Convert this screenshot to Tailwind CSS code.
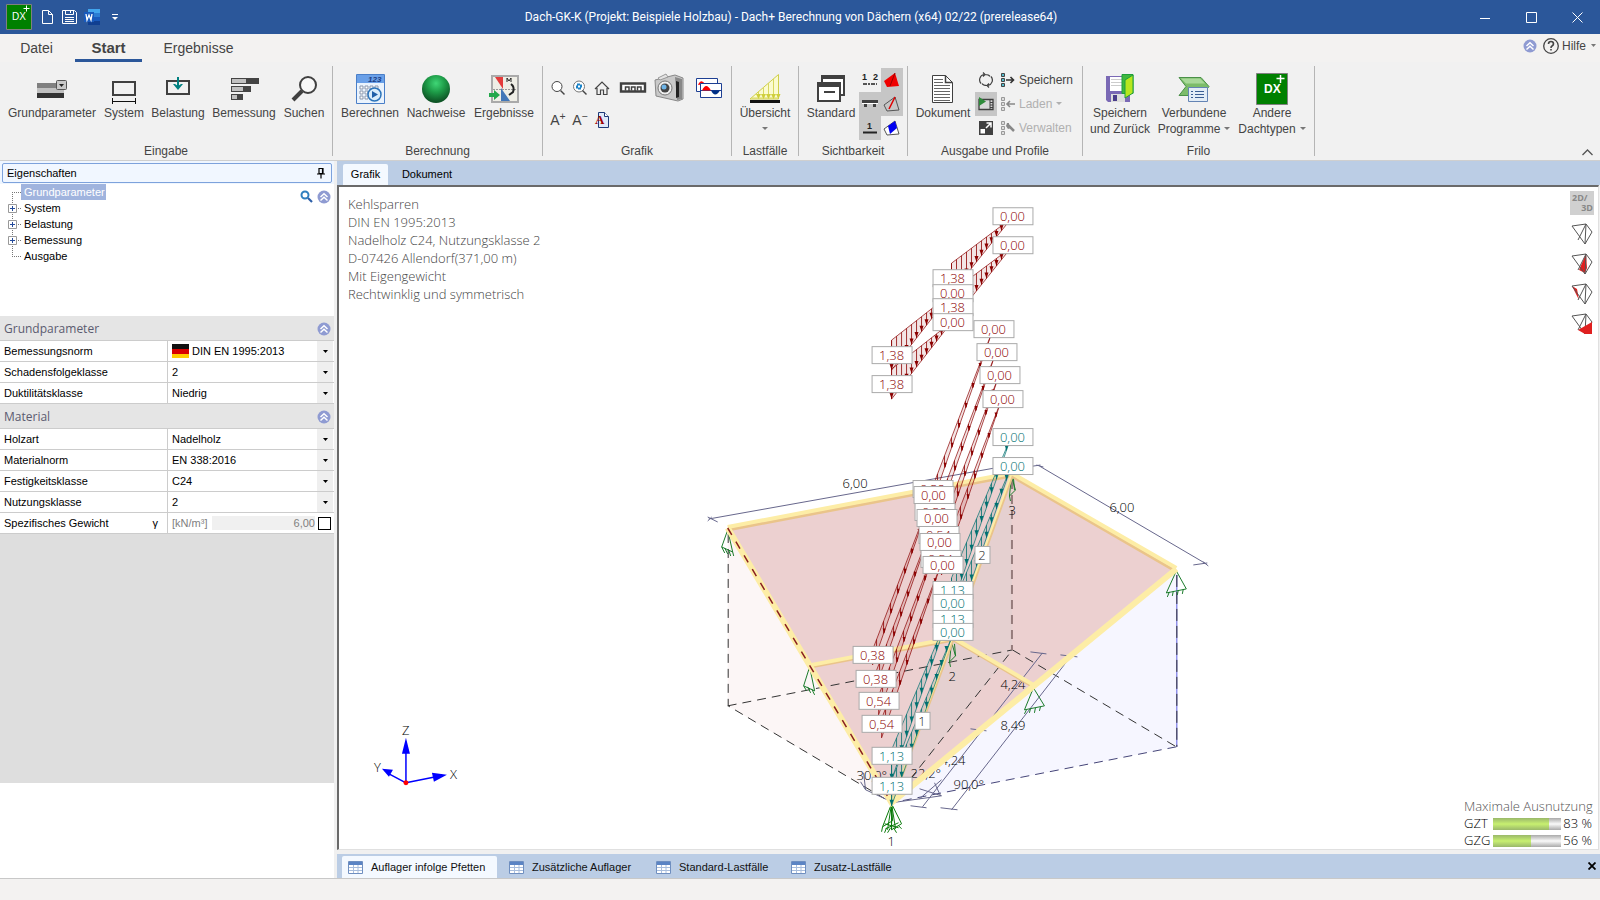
<!DOCTYPE html>
<html lang="de">
<head>
  <meta charset="UTF-8">
  <meta name="viewport" content="width=device-width, initial-scale=1.0">
  <title>Dach-GK-K - Dach+ Berechnung von Dächern</title>
  <script src="https://cdn.jsdelivr.net/npm/@tailwindcss/browser@4"></script>
</head>
<body class="flex h-screen flex-col overflow-hidden bg-[#f0f0f0] font-['Liberation_Sans',sans-serif] text-xs text-[#444]">

  <!-- shared icons -->
  <svg class="hidden">
    <symbol id="collapse" viewBox="0 0 14 14">
      <circle cx="7" cy="7" r="6.5" fill="#8f9bd2"/>
      <path d="M3.5 7 7 3.8 10.500 7M3.500 10.500 7 7.300 10.500 10.500" fill="none" stroke="#fff" stroke-width="1.500"/>
    </symbol>
    <symbol id="sheet" viewBox="0 0 15 13">
      <path d="M.5.5h14v12H.500z" fill="#fff" stroke="#6f8fc0"/>
      <path d="M1 1h13v3H1z" fill="#5b84c4"/>
      <path d="M1 6.500h13M1 9.500h13M5.500 4v8M10 4v8" stroke="#a9bedd"/>
    </symbol>
    <symbol id="roof" viewBox="0 0 22 22">
      <path d="M1 3 15 1 21 9 14 21zM7 17 15 1M15 1l-1 20" fill="none" stroke="#555"/>
    </symbol>
  </svg>

  <header class="flex h-[34px] shrink-0 items-center bg-[#2b579a] text-white">
    <div class="flex w-[340px] items-center pl-[6px]">
      <svg class="h-[26px] w-[26px]" viewBox="0 0 26 26"><path d="M.5.5h25v25H.500z" fill="#008000" stroke="#808080"/><path d="M20.500 1.500v6M17.500 4.500h6" stroke="#fff"/><text x="6" y="16" font-size="10" fill="#fff" font-family="Liberation Sans Narrow, Liberation Sans">DX</text></svg>
      <button class="ml-[10px]" aria-label="Neu"><svg width="11" height="14" viewBox="0 0 11 14"><path d="M.5.5h6l4 4v9H.500zM6.500.500v4h4" fill="none" stroke="#fff"/></svg></button>
      <button class="ml-[9px]" aria-label="Speichern"><svg width="15" height="14" viewBox="0 0 15 14"><path d="M.5.5h12l2 2v11H.500zM3.500.500v4h8v-4M8.500 1v2M3 7.500h9M3 9.500h9M3 11.500h9" fill="none" stroke="#fff"/></svg></button>
      <button class="ml-[7px]" aria-label="Word"><svg width="16" height="16" viewBox="0 0 16 16"><path d="M4 0h12v4H4z" fill="#41a5ee"/><path d="M4 4h12v4H4z" fill="#2b7cd3"/><path d="M4 8h12v4H4z" fill="#185abd"/><path d="M4 12h12v4H4z" fill="#103f91"/><path d="M0 3h10v10H0z" fill="#185abd"/><path d="m2 5 1 6 2-5 2 5 1-6" fill="none" stroke="#fff" stroke-width="1.300"/></svg></button>
      <button class="ml-[12px]" aria-label="Anpassen"><svg width="6" height="7" viewBox="0 0 6 7"><path d="M0 .5h6" stroke="#fff"/><path d="M0 3h6L3 6z" fill="#fff"/></svg></button>
    </div>
    <h1 class="flex-1 text-center font-['Roboto',sans-serif]">Dach-GK-K (Projekt: Beispiele Holzbau) - Dach+ Berechnung von Dächern (x64) 02/22 (prerelease64)</h1>
    <div class="flex w-[358px] justify-end">
      <button class="flex h-[34px] w-[46px] items-center justify-center" aria-label="Minimieren"><svg width="11" height="11"><path d="M0 6.500h10" stroke="#fff"/></svg></button>
      <button class="flex h-[34px] w-[46px] items-center justify-center" aria-label="Maximieren"><svg width="11" height="11"><path d="M.5.500h10v10H.500z" fill="none" stroke="#fff"/></svg></button>
      <button class="flex h-[34px] w-[46px] items-center justify-center" aria-label="Schließen"><svg width="11" height="11"><path d="m.5.500 10 10M10.500.500l-10 10" stroke="#fff"/></svg></button>
    </div>
  </header>

  <nav class="flex h-[28px] shrink-0 bg-[#f3f2f1] text-sm">
    <button class="w-[73px]">Datei</button>
    <button class="ml-[2px] w-[67px] border-b-3 border-[#2b579a] pt-[3px] text-[15px] font-bold">Start</button>
    <button class="w-[113px]">Ergebnisse</button>
    <div class="ml-auto flex items-center gap-[6px] pr-[4px] pb-[5px] text-xs">
      <svg class="h-[14px] w-[14px]"><use href="#collapse"/></svg>
      <button class="flex items-center gap-[3px]">
        <svg width="16" height="16" viewBox="0 0 16 16"><circle cx="8" cy="8" r="7.300" fill="none" stroke="#444" stroke-width="1.300"/><path d="M5.500 6q0-2.500 2.500-2.500T10.500 6q0 1-1.500 2-1 .600-1 2M8 11v1.500" fill="none" stroke="#444" stroke-width="1.600"/></svg>
        Hilfe
        <svg class="ml-[2px]" width="5" height="4"><path d="M0 0h5L2.500 3z" fill="#777"/></svg>
      </button>
    </div>
  </nav>

  <!-- ribbon -->
  <div class="relative flex h-[99px] shrink-0 border-b border-[#cfcfcf] bg-[#f1f1f1] py-[4px] leading-4">
    <section class="flex w-[333px] flex-col border-r border-[#b5b5b5]">
      <div class="flex flex-1 items-start pt-[7px]">
        <button class="flex w-[104px] flex-col items-center"><svg width="32" height="32" viewBox="0 0 32 32"><path d="M1 10h27v5H1z" fill="#808080"/><path d="M1 15h27v5H1z" fill="#c0c0c0"/><path d="M1 20h27v5H1z" fill="#333"/><rect x="20.500" y="7.500" width="10" height="9" rx="1" fill="#c8c8c8" stroke="#555"/><path d="M23 11h5l-2.500 3z" fill="#222"/></svg>Grundparameter</button>
        <button class="flex w-[40px] flex-col items-center"><svg width="32" height="32" viewBox="0 0 32 32"><path d="M5 9h22v13H5z" fill="none" stroke="#404040" stroke-width="2"/><path d="M4 28.500h24M4.500 25v6M27.500 25v6" stroke="#111"/></svg>System</button>
        <button class="flex w-[68px] flex-col items-center"><svg width="32" height="32" viewBox="0 0 32 32"><path d="M5 8h22v13H5z" fill="none" stroke="#404040" stroke-width="2"/><path d="M16 4v9" stroke="#008080" stroke-width="2"/><path d="M11 11h2l3 2 3-2h2l-5 6z" fill="#008080"/></svg>Belastung</button>
        <button class="flex w-[64px] flex-col items-center"><svg width="32" height="32" viewBox="0 0 32 32"><path d="M3 5h28v6H3zM3 13h20v6H3zM3 21h12v6H3z" fill="#444"/><path d="M4 6h14v4H4zM4 14h11v4H4zM4 22h5v4H4z" fill="#c0c0c0"/></svg>Bemessung</button>
        <button class="flex w-[56px] flex-col items-center"><svg width="32" height="32" viewBox="0 0 32 32"><circle cx="20" cy="12" r="8" fill="#f8f8f8" stroke="#404040" stroke-width="2"/><path d="M14 18 5 27" stroke="#404040" stroke-width="4"/></svg>Suchen</button>
      </div>
      <p class="-mb-[3px] text-center">Eingabe</p>
    </section>

    <section class="flex w-[210px] flex-col border-r border-[#b5b5b5]">
      <div class="flex flex-1 items-start pt-[7px] pl-[4px]">
        <button class="flex w-[66px] flex-col items-center"><svg width="32" height="32" viewBox="0 0 32 32"><path d="M2.500 1.500h28v29h-28z" fill="#eaf3fd" stroke="#4a7fc8"/><path d="M3 2h27v8H3z" fill="#6aa0e8"/><text x="14" y="9" font-size="8" font-style="italic" font-weight="bold" fill="#1c3f86">123</text><path d="M6 13h3v3H6zM11 13h3v3h-3zM16 13h3v3h-3zM21 13h3v3h-3zM6 18h3v3H6zM11 18h3v3h-3zM6 23h3v3H6zM11 23h3v3h-3z" fill="#fff" stroke="#8a97ad"/><circle cx="20.500" cy="21.500" r="6.500" fill="#d8ecfb" stroke="#2d74ba" stroke-width="1.500"/><path d="m18 18 6 3.500-6 3.500z" fill="#1f5fa8"/></svg>Berechnen</button>
        <button class="flex w-[66px] flex-col items-center"><svg width="32" height="32" viewBox="0 0 32 32"><defs><radialGradient id="ball" cx=".5" cy=".3" r=".65"><stop offset="0" stop-color="#3fd676"/><stop offset=".5" stop-color="#1d9a47"/><stop offset="1" stop-color="#0e5526"/></radialGradient></defs><circle cx="16" cy="16" r="14" fill="url(#ball)"/></svg>Nachweise</button>
        <button class="flex w-[70px] flex-col items-center"><svg width="32" height="32" viewBox="0 0 32 32"><path d="M4 3h26v26H4z" fill="#efeee6" stroke="#aaa" stroke-width="2"/><path d="M7 4h8v12z" fill="#e43b3b"/><path d="m13 15 9 13h-9z" fill="#4377b8"/><path d="M5 16.500h24" stroke="#999" stroke-dasharray="2 1"/><path d="M23 11q4 3 2 8l-4 3" fill="none" stroke="#222" stroke-width="2"/><path d="M19 9V5l2 3 2-3v4" fill="none" stroke="#222"/><path d="M1 20h5v-3l6 5-6 5v-3H1z" fill="#22a84a"/></svg>Ergebnisse</button>
      </div>
      <p class="-mb-[3px] text-center">Berechnung</p>
    </section>

    <section class="flex w-[189px] flex-col border-r border-[#b5b5b5]">
      <div class="grid flex-1 grid-cols-[22px_22px_22px_40px_32px_48px] grid-rows-[32px_32px] place-items-center pt-[6px] pl-[4px]">
        <button aria-label="Lupe"><svg width="16" height="16" viewBox="0 0 16 16"><circle cx="7" cy="6.500" r="5" fill="#fff" stroke="#444"/><path d="m10.500 10.500 4 4" stroke="#444" stroke-width="1.500"/></svg></button>
        <button aria-label="Ausschnitt"><svg width="16" height="16" viewBox="0 0 16 16"><circle cx="7" cy="6.500" r="5.500" fill="#fff" stroke="#777"/><path d="m10.500 10.500 4 4" stroke="#444" stroke-width="1.500"/><path d="M5 4.500h4v4H5z" fill="none" stroke="#1b83c8" stroke-width="2" stroke-dasharray="3 1"/></svg></button>
        <button aria-label="Gesamtansicht"><svg width="16" height="16" viewBox="0 0 16 16"><path d="m1 9 7-7 7 7M3 8v6.500h3.500V10h3v4.500H13V8" fill="none" stroke="#444" stroke-width="1.200"/></svg></button>
        <button aria-label="Maßlinien"><svg width="28" height="14" viewBox="0 0 28 14"><path d="M2 2.500h24v8H2z" fill="#fff" stroke="#404040" stroke-width="2.400"/><path d="M6.500 9.500V6h3.500v4M12.500 9.500V6h3.500v4M18.500 9.500V6h3.500v4" fill="none" stroke="#404040" stroke-width="1.500"/></svg></button>
        <button aria-label="Bild"><svg width="32" height="32" viewBox="0 0 32 32"><path d="m2 8 20-5 8 3v21l-5 2L3 24z" fill="#c9c9c9" stroke="#888"/><path d="m22 5 7 2v20l-5 1z" fill="#888"/><path d="m23 9 3 1v15l-3 1z" fill="#222"/><path d="m5 6 8-4 2 3-8 3z" fill="#e4e4e4" stroke="#999"/><circle cx="12" cy="16" r="7" fill="#eee" stroke="#777"/><circle cx="12" cy="16" r="4.500" fill="#444"/><circle cx="11" cy="15" r="2.500" fill="#6fb5e8"/></svg></button>
        <button aria-label="Ergebnisgrafik"><svg width="28" height="22" viewBox="0 0 28 22"><path d="M1.500 1.500h21v13h-21z" fill="#fff" stroke="#1d3f93"/><path d="M3 8q3-7 7-1z" fill="red"/><path d="M5.500 6.500h21v14h-21z" fill="#fff" stroke="#1d3f93"/><path d="M6 13.500h20" stroke="#1d3f93"/><path d="M7 13.500q4-9 9 0z" fill="red"/><path d="M16 13.500q4 8 9 0z" fill="#003087"/></svg></button>
        <button class="text-sm" aria-label="Schrift größer">A<sup>+</sup></button>
        <button class="text-sm" aria-label="Schrift kleiner">A<sup>−</sup></button>
        <button aria-label="Schriftart"><svg width="16" height="16" viewBox="0 0 16 16"><path d="M4.500.500h6l4 4v11h-10z" fill="#dfe9f8" stroke="#1e3a78"/><path d="M10.500.500v4h4" fill="#fff" stroke="#1e3a78"/><text x="1" y="12" font-size="13" font-weight="bold" fill="#a00000" font-family="Liberation Serif">A</text></svg></button>
      </div>
      <p class="-mb-[3px] text-center">Grafik</p>
    </section>

    <section class="flex w-[67px] flex-col border-r border-[#b5b5b5]">
      <div class="flex flex-1 items-start justify-center pt-[7px]">
        <button class="flex flex-col items-center"><svg width="32" height="32" viewBox="0 0 32 32"><path d="M1 27h30v3H1z" fill="#111"/><path d="M1 26 29.500 1.500V26z" fill="#fbfbd0" stroke="#cfcf4a"/><path d="M9.500 18v7M14.500 14v11M19.500 10v15M24.500 6v19M3 25h26" stroke="#d8d860"/><path d="m7 21 2.500 5 2.500-5zM12 21l2.500 5 2.500-5zM17 21l2.500 5 2.500-5zM22 21l2.500 5 2.500-5zM27 21l2.500 5 2-5z" fill="#cfcf3c"/></svg>Übersicht<svg class="mt-[6px]" width="6" height="4"><path d="M0 0h6L3 3z" fill="#777"/></svg></button>
      </div>
      <p class="-mb-[3px] text-center">Lastfälle</p>
    </section>

    <section class="flex w-[109px] flex-col border-r border-[#b5b5b5]">
      <div class="flex flex-1 items-start">
        <button class="flex w-[60px] flex-col items-center pt-[7px] pl-[4px]"><svg width="32" height="32" viewBox="0 0 32 32"><path d="M7 3h22v19H7z" fill="#fff" stroke="#404040" stroke-width="2"/><path d="M6 2h24v4H6z" fill="#404040"/><path d="M3 10h22v18H3z" fill="#fff" stroke="#404040" stroke-width="2"/><path d="M2 9h24v5H2z" fill="#404040"/><path d="M9 19h11" stroke="#404040" stroke-width="2"/></svg>Standard</button>
        <div class="grid grid-cols-[22px_22px] grid-rows-[24px_24px_24px] pt-[2px]">
          <button class="flex items-center justify-center" aria-label="Stabnummern"><svg width="18" height="16" viewBox="0 0 18 16"><text x="1" y="8" font-size="9" font-weight="bold" fill="#222">1</text><text x="12" y="8" font-size="9" font-weight="bold" fill="#222">2</text><path d="M2 12h14" stroke="#222" stroke-width="1.500" stroke-dasharray="4 1 2 1"/></svg></button>
          <button class="flex items-center justify-center bg-[#c6c6c6]" aria-label="Flächen"><svg width="18" height="18" viewBox="0 0 18 18"><path d="M1 10 12 2l4 13-12 1z" fill="#f00000"/><path d="m12 2-5 13" stroke="#900"/></svg></button>
          <button class="flex items-center justify-center bg-[#c6c6c6]" aria-label="Auflager"><svg width="16" height="12" viewBox="0 0 16 12"><path d="M0 2h16v3H0z" fill="#404040"/><path d="M2 6h3v3H2zM11 6h3v3h-3z" fill="#404040"/><path d="M0 5.500h16" stroke="#fff"/></svg></button>
          <button class="flex items-center justify-center bg-[#c6c6c6]" aria-label="Kanten"><svg width="18" height="18" viewBox="0 0 18 18"><path d="m1 10 11-8 4 13-12 1z" fill="none" stroke="#555"/><path d="M12 2 6 14" stroke="#e00000" stroke-width="1.500"/></svg></button>
          <button class="flex items-center justify-center bg-[#c6c6c6]" aria-label="Knoten"><svg width="16" height="14" viewBox="0 0 16 14"><text x="5" y="8" font-size="9" font-weight="bold" fill="#222">1</text><path d="M1 11.500h14" stroke="#222" stroke-width="2"/></svg></button>
          <button class="flex items-center justify-center" aria-label="Dachfläche"><svg width="18" height="18" viewBox="0 0 18 18"><path d="m1 10 11-8 4 13-12 1z" fill="#fff" stroke="#555"/><path d="m5 7 7-5 2 7-7 6z" fill="#0000f0"/></svg></button>
        </div>
      </div>
      <p class="-mb-[3px] text-center">Sichtbarkeit</p>
    </section>

    <section class="flex w-[175px] flex-col border-r border-[#b5b5b5]">
      <div class="flex flex-1 items-start">
        <button class="flex w-[67px] flex-col items-center pt-[7px] pl-[3px]"><svg width="32" height="32" viewBox="0 0 32 32"><path d="M5.500 2.500h13l7 7v20h-20z" fill="#fff" stroke="#404040"/><path d="M18.500 2.500v7h7" fill="none" stroke="#404040" stroke-width="1.500"/><path d="M7 6.500h9M7 9.500h9M7 12.500h16M7 15.500h16M7 18.500h16M7 21.500h16M7 24.500h16M7 27.500h16" stroke="#666"/></svg>Dokument</button>
        <div class="grid w-[22px] grid-rows-[24px_24px_24px] pt-[2px]">
          <button class="flex items-center justify-center" aria-label="Aktualisieren"><svg width="14" height="16" viewBox="0 0 14 16"><path d="M5 2.500a5.500 5.500 0 0 0-3 9M9 13.500a5.500 5.500 0 0 0 3-9M4 .500l2 2-2 2M10 15.500l-2-2 2-2M6 2.500q4 0 5 2M8 13.500q-4 0-5-2" fill="none" stroke="#404040" stroke-width="1.200"/></svg></button>
          <button class="flex items-center justify-center bg-[#c6c6c6]" aria-label="Vorschau"><svg width="16" height="14" viewBox="0 0 16 14"><path d="M1 2.500h14v10H1z" fill="#d8d8d8" stroke="#404040" stroke-width="1.300"/><path d="M12 3v9M12 5.500h3M12 8h3M12 10.500h3" stroke="#404040"/><path d="m1 0 7 4.500L1 9z" fill="#2e8b3a"/></svg></button>
          <button class="flex items-center justify-center" aria-label="Vergrößern"><svg width="14" height="14" viewBox="0 0 14 14"><path d="M0 0h14v14H0z" fill="#404040"/><path d="M1.500 8H6v4.500H1.500z" fill="#fff"/><path d="M7 7l5-5M7.500 2H12v4.500" fill="none" stroke="#fff" stroke-width="1.500"/></svg></button>
        </div>
        <div class="grid grid-rows-[24px_24px_24px] pt-[2px] pl-[4px]">
          <button class="flex items-center gap-[4px]"><svg width="14" height="14" viewBox="0 0 14 14"><path d="M.5.500h3v3h-3zM.500 5.500h3v3h-3zM.500 10.500h3v3h-3z" fill="#5bc" stroke="#444"/><path d="M5 7h7M9.500 4l3 3-3 3" fill="none" stroke="#333" stroke-width="1.600"/></svg>Speichern</button>
          <button class="flex items-center gap-[4px] text-[#b0b0b0]" disabled><svg width="14" height="14" viewBox="0 0 14 14"><path d="M.5.500h3v3h-3zM.500 5.500h3v3h-3zM.500 10.500h3v3h-3z" fill="#ddd" stroke="#999"/><path d="M14 7H7M9 4 6 7l3 3" fill="none" stroke="#888" stroke-width="1.600"/></svg>Laden<svg width="6" height="4"><path d="M0 0h6L3 3z" fill="#b0b0b0"/></svg></button>
          <button class="flex items-center gap-[4px] text-[#b0b0b0]" disabled><svg width="14" height="14" viewBox="0 0 14 14"><path d="M.5.500h3v3h-3zM.500 5.500h3v3h-3zM.500 10.500h3v3h-3z" fill="#ddd" stroke="#999"/><path d="m7 4 6 6" stroke="#888" stroke-width="2.500"/><path d="M6 2h2v3h2v2L7 8 5 5z" fill="#888"/></svg>Verwalten</button>
        </div>
      </div>
      <p class="-mb-[3px] text-center">Ausgabe und Profile</p>
    </section>

    <section class="flex w-[232px] flex-col border-r border-[#b5b5b5]">
      <div class="flex flex-1 items-start pt-[7px] pl-[1px]">
        <button class="flex w-[72px] flex-col items-center"><svg width="32" height="32" viewBox="0 0 32 32"><path d="M2 3h24v26H4l-2-2z" fill="#7a69b5"/><path d="M6 4h14v14H6z" fill="#fff"/><path d="M7 6.500h12M7 9.500h12M7 12.500h12" stroke="#ccc"/><path d="M7 21h14v8H7z" fill="#ddd"/><path d="M9 22h4v6H9z" fill="#4a3d8a"/><path d="M18 1.500h11v19H18z" fill="#3fb83f" stroke="#1f9f3a"/><path d="m21 7 8-5v18l-8 5z" fill="#b8e61e" stroke="#1f9f3a"/></svg>Speichern<span>und Zurück</span></button>
        <button class="flex w-[76px] flex-col items-center"><svg width="32" height="32" viewBox="0 0 32 32"><path d="M1 4.500h22l8 9-7 9H1l7-9z" fill="#7cbc6a" stroke="#4a9048"/><path d="M3 5.500h19l5 5H8z" fill="#a9d99a"/><path d="M10.500 14.500h19v14h-19z" fill="#e3edf7" stroke="#6484b4"/><path d="M13 18.500h2M13 21.500h2M13 24.500h2M17 18.500h9M17 21.500h9M17 24.500h9" stroke="#3c5f94"/></svg>Verbundene<span class="flex items-center gap-[4px]">Programme<svg width="6" height="4"><path d="M0 0h6L3 3z" fill="#777"/></svg></span></button>
        <button class="flex w-[80px] flex-col items-center"><svg width="32" height="32" viewBox="0 0 32 32"><path d="M.5.500h31v31H.500z" fill="#008000" stroke="#808080"/><path d="M24.500 2v8M20.500 5.500h8" stroke="#fff" stroke-width="1.500"/><text x="8" y="20" font-size="12" fill="#fff" font-weight="bold" font-family="Liberation Sans Narrow, Liberation Sans">DX</text></svg>Andere<span class="flex items-center gap-[4px]">Dachtypen<svg width="6" height="4"><path d="M0 0h6L3 3z" fill="#777"/></svg></span></button>
      </div>
      <p class="-mb-[3px] text-center">Frilo</p>
    </section>
    <button class="mt-auto mr-[7px] ml-auto" aria-label="Menüband einklappen"><svg width="11" height="7"><path d="m.5 6 5-5 5 5" fill="none" stroke="#555" stroke-width="1.300"/></svg></button>
  </div>

  <main class="flex min-h-0 flex-1">
    <!-- properties -->
    <aside class="flex w-[334px] shrink-0 flex-col bg-white text-[11px] text-black">
      <div class="bg-[#eff6ff] px-[2px] pt-[2px] pb-px">
        <h2 class="flex h-[20px] items-center justify-between rounded-xs border border-[#7da2dc] bg-[#f1f7ff] pr-[6px] pl-[4px]">Eigenschaften
          <svg width="8" height="11" viewBox="0 0 8 11"><path d="M2 .500h4v5H2zM0 6h8M4 6v4.500M5.500 1v5" fill="none" stroke="#000" stroke-width="1.200"/></svg>
        </h2>
      </div>
      <div class="flex h-[132px] justify-between">
        <ul class="relative pl-[21px] leading-4">
          <li class="w-[85px] bg-[#a0b4de] px-[3px] text-white">Grundparameter</li>
          <li class="px-[3px]">System</li>
          <li class="px-[3px]">Belastung</li>
          <li class="px-[3px]">Bemessung</li>
          <li class="px-[3px]">Ausgabe</li>
          <svg class="absolute top-0 left-[8px]" width="13" height="80" viewBox="0 0 13 80">
            <path d="M4.500 8v64M4 8.500h9M4 24.500h9M4 40.500h9M4 56.500h9M4 72.500h9" stroke="#777" stroke-dasharray="1 1"/>
            <path d="M.5 20.500h8v8h-8zM.500 36.500h8v8h-8zM.500 52.500h8v8h-8z" fill="#fff" stroke="#999"/>
            <path d="M2 24.500h5M4.500 22v5M2 40.500h5M4.500 38v5M2 56.500h5M4.500 54v5" stroke="#234a9a"/>
          </svg>
        </ul>
        <div class="flex items-start gap-[4px] pt-[6px] pr-[3px]">
          <svg width="13" height="13" viewBox="0 0 13 13"><circle cx="5" cy="5" r="3.500" fill="#fff" stroke="#2f7fbf" stroke-width="2"/><path d="m8 8 4 4" stroke="#2c5ea8" stroke-width="2.200"/></svg>
          <svg class="h-[14px] w-[14px]"><use href="#collapse"/></svg>
        </div>
      </div>

      <div class="flex-1 bg-white">
        <form class="h-[467px] bg-[#dedede]">
          <h3 class="flex h-[25px] items-center justify-between border-b border-[#ccc] bg-[#e5e5e5] pt-[2px] pr-[3px] pl-[4px] font-['Open_Sans',sans-serif] text-xs font-medium text-[#5b5b70]">Grundparameter<svg class="h-[14px] w-[14px]"><use href="#collapse"/></svg></h3>
          <div class="flex h-[21px] border-b border-[#ccc] bg-white">
            <label for="norm" class="w-[168px] shrink-0 border-r border-[#ccc] pl-[4px] leading-[20px]">Bemessungsnorm</label>
            <div class="relative flex flex-1 items-center gap-[3px] pl-[4px]">
              <svg width="17" height="14"><path d="M0 0h17v5H0z" fill="#111"/><path d="M0 5h17v5H0z" fill="#d80000"/><path d="M0 10h17v4H0z" fill="#ffcc00"/></svg>
              <select id="norm" class="h-full flex-1 appearance-none pt-px"><option>DIN EN 1995:2013</option></select>
              <span class="pointer-events-none absolute top-0 right-px flex h-full w-[16px] items-center justify-center bg-[#efefef]"><svg width="5" height="3"><path d="M0 0h5L2.500 3z" fill="#000"/></svg></span>
            </div>
          </div>
          <div class="flex h-[21px] border-b border-[#ccc] bg-white">
            <label for="folge" class="w-[168px] shrink-0 border-r border-[#ccc] pl-[4px] leading-[20px]">Schadensfolgeklasse</label>
            <div class="relative flex flex-1 pl-[4px]">
              <select id="folge" class="h-full flex-1 appearance-none pt-px"><option>2</option></select>
              <span class="pointer-events-none absolute top-0 right-px flex h-full w-[16px] items-center justify-center bg-[#efefef]"><svg width="5" height="3"><path d="M0 0h5L2.500 3z" fill="#000"/></svg></span>
            </div>
          </div>
          <div class="flex h-[21px] border-b border-[#ccc] bg-white">
            <label for="dukt" class="w-[168px] shrink-0 border-r border-[#ccc] pl-[4px] leading-[20px]">Duktilitätsklasse</label>
            <div class="relative flex flex-1 pl-[4px]">
              <select id="dukt" class="h-full flex-1 appearance-none pt-px"><option>Niedrig</option></select>
              <span class="pointer-events-none absolute top-0 right-px flex h-full w-[16px] items-center justify-center bg-[#efefef]"><svg width="5" height="3"><path d="M0 0h5L2.500 3z" fill="#000"/></svg></span>
            </div>
          </div>
          <h3 class="flex h-[25px] items-center justify-between border-b border-[#ccc] bg-[#e5e5e5] pt-[2px] pr-[3px] pl-[4px] font-['Open_Sans',sans-serif] text-xs font-medium text-[#5b5b70]">Material<svg class="h-[14px] w-[14px]"><use href="#collapse"/></svg></h3>
          <div class="flex h-[21px] border-b border-[#ccc] bg-white">
            <label for="holz" class="w-[168px] shrink-0 border-r border-[#ccc] pl-[4px] leading-[20px]">Holzart</label>
            <div class="relative flex flex-1 pl-[4px]">
              <select id="holz" class="h-full flex-1 appearance-none pt-px"><option>Nadelholz</option></select>
              <span class="pointer-events-none absolute top-0 right-px flex h-full w-[16px] items-center justify-center bg-[#efefef]"><svg width="5" height="3"><path d="M0 0h5L2.500 3z" fill="#000"/></svg></span>
            </div>
          </div>
          <div class="flex h-[21px] border-b border-[#ccc] bg-white">
            <label for="matnorm" class="w-[168px] shrink-0 border-r border-[#ccc] pl-[4px] leading-[20px]">Materialnorm</label>
            <div class="relative flex flex-1 pl-[4px]">
              <select id="matnorm" class="h-full flex-1 appearance-none pt-px"><option>EN 338:2016</option></select>
              <span class="pointer-events-none absolute top-0 right-px flex h-full w-[16px] items-center justify-center bg-[#efefef]"><svg width="5" height="3"><path d="M0 0h5L2.500 3z" fill="#000"/></svg></span>
            </div>
          </div>
          <div class="flex h-[21px] border-b border-[#ccc] bg-white">
            <label for="fest" class="w-[168px] shrink-0 border-r border-[#ccc] pl-[4px] leading-[20px]">Festigkeitsklasse</label>
            <div class="relative flex flex-1 pl-[4px]">
              <select id="fest" class="h-full flex-1 appearance-none pt-px"><option>C24</option></select>
              <span class="pointer-events-none absolute top-0 right-px flex h-full w-[16px] items-center justify-center bg-[#efefef]"><svg width="5" height="3"><path d="M0 0h5L2.500 3z" fill="#000"/></svg></span>
            </div>
          </div>
          <div class="flex h-[21px] border-b border-[#ccc] bg-white">
            <label for="nutz" class="w-[168px] shrink-0 border-r border-[#ccc] pl-[4px] leading-[20px]">Nutzungsklasse</label>
            <div class="relative flex flex-1 pl-[4px]">
              <select id="nutz" class="h-full flex-1 appearance-none pt-px"><option>2</option></select>
              <span class="pointer-events-none absolute top-0 right-px flex h-full w-[16px] items-center justify-center bg-[#efefef]"><svg width="5" height="3"><path d="M0 0h5L2.500 3z" fill="#000"/></svg></span>
            </div>
          </div>
          <div class="flex h-[21px] border-b border-[#ccc] bg-white">
            <label for="gewicht" class="flex w-[168px] shrink-0 justify-between border-r border-[#ccc] pr-[9px] pl-[4px] leading-[20px]">Spezifisches Gewicht<span>γ</span></label>
            <div class="flex min-w-0 flex-1 items-center gap-[3px] pr-[3px] pl-[4px] text-[#808080]">
              <span class="w-[37px]">[kN/m³]</span>
              <input id="gewicht" class="h-[14px] min-w-0 flex-1 bg-[#f0f0f0] text-right" value="6,00">
              <input type="checkbox" aria-label="Gewicht überschreiben" class="h-[13px] w-[13px] appearance-none border border-black bg-white">
            </div>
          </div>
        </form>
      </div>
    </aside>

    <section class="flex min-w-0 flex-1 flex-col pl-[3px] text-[11px] text-black">
      <div class="flex h-[24px] items-end bg-[#bbcde5] pl-[6px]">
        <button class="h-[21px] w-[45px] rounded-t-xs bg-[#f4f9ff] pb-px">Grafik</button>
        <button class="ml-[7px] h-[21px] w-[64px] pb-px">Dokument</button>
      </div>

      <div class="relative mr-px flex-1 border-t-2 border-r border-b border-l-2 border-t-[#6a6a6a] border-r-[#e0e0e0] border-b-[#e0e0e0] border-l-[#6a6a6a] bg-white font-['Open_Sans',sans-serif] font-light">
        <svg id="scene" class="absolute inset-0 h-full w-full" viewBox="338 187 1260 662" font-size="13">
          <!-- faces -->
          <path d="M727 528V706L891 803z" fill="#fcf6f6"/>
          <path d="M1176 569V747L891 803z" fill="#f6f6ff"/>
          <path d="M727 528 1011 474 1176 569 891 803z" fill="#ecd0d0"/>
          <path d="M1011 474 1012 650 891 803z" fill="#e5d0d0"/>
          <!-- base and verticals -->
          <g fill="none" stroke="#333" stroke-dasharray="9 6">
            <path d="M727.500 534V706L891 803M727 706 1012 650M1012 650l164 97M891 803l121-153"/>
            <path d="M1011.500 480V650" stroke="#967c7c" stroke-width="2"/>
            <path d="M1176.500 575V747" stroke="#5a5ae0" stroke-dasharray="none"/>
            <path d="M1176.500 575V747" stroke-dasharray="12 5"/>
            <path d="M1176 747 891 803" stroke="#447"/>
          </g>
          <!-- dimension lines -->
          <g fill="none" stroke="#66668c">
            <path d="m708 519 303-54M1026 467l14-2M1039 466l167 98M707 517l10 5M711 517l-4 4M1036 465l7 2M1193 565l14-2M1203 562l5 4"/>
            <path d="M1042 653 922 807M1070 657 951 810M1030 652l16 2M1060 655l17 2M970 729l16 2M910 806l16 2M940 808l17 2"/>
            <path d="M863 773l2 17 26 12M865 790l-5-8M891 803l50-7-22-7M919 799l22-19M934 783l6 13"/>
          </g>
          <g fill="#000">
            <text x="842" y="488">6,00</text>
            <text x="1109" y="512">6,00</text>
            <text x="1000" y="689">4,24</text>
            <text x="1000" y="730">8,49</text>
            <text x="940" y="765">4,24</text>
            <text x="856" y="780">30,0°</text>
            <text x="910" y="778">22,2°</text>
            <text x="953" y="789">90,0°</text>
            <text x="1008" y="515">3</text>
            <text x="948" y="681">2</text>
            <text x="887" y="846">1</text>
          </g>
          <!-- supports -->
          <g fill="none" stroke="#1a7a2a">
            <path d="m727 530-6 17 11 5zM721 547l3 6M724 548l3 6M728 550l2 6M732 552l1 4"/>
            <path d="m809 667-6 19 11 5zM803 686l3 5M807 687l3 6M811 689l3 6"/>
            <path d="m1176 571-10 22 20-4zM1169 592l-2 5M1173 591l-1 5M1178 590l-1 5M1183 589l-1 5"/>
            <path d="m1033 688-9 22 20-4zM1026 710l-2 4M1030 709l-1 4M1035 708l-1 5M1040 707l-1 4"/>
            <path d="m1011 476-2 20 6-6zM1009 496l1 5M1013 478l1 12"/>
            <path d="m951 642-2 20 6-6zM949 662l1 5M954 644l1 12"/>
            <path d="m891 804-9 23 10-6zM891 804l10 20-10 6zM891 804l-4 26M891 804l4 25M891 804v26M882 827l-1 5M886 828l-2 5M890 828l-3 5M893 828l3 5M898 826l3 3M884 824l14 4M885 829l13-6" stroke="#0a7a0a"/>
          </g>
          <!-- rafters -->
          <g fill="none" stroke-width="3">
            <path d="M727 530 1011 476 1175 571M811 667 953 640 1033 687" stroke="#eac48a"/>
            <path d="m1012 475-60 166-61 162" stroke="#eac48a"/>
            <path d="m1011 474-60 166-60 162" stroke="#fdeda6" stroke-width="2"/>
            <path d="M727 527 1011 473 1176 568M811 665 953 638 1033 685" stroke="#fdeda6" stroke-width="4"/>
            <path d="M727 528 891 803 1176 569" stroke="#fdeda6" stroke-width="6"/>
            <path d="M727 528 891 803" stroke="#8b2020" stroke-width="1.500" stroke-dasharray="8 8"/>
          </g>
          <g id="loads"></g>
          <g id="labels"></g>
          <!-- axes -->
          <g stroke="#00f" fill="#00f">
            <path d="M405 783v-35M405 783l30-6M405 783l-17-9" stroke-width="1.500"/>
            <path d="m401 754 4-16 4 16zM431 773l15 2-13 7zM381 769l11 1-4 7z" stroke="none"/>
          </g>
          <circle cx="405" cy="783" r="2.500" fill="red"/>
          <g fill="#000"><text x="401" y="735">Z</text><text x="449" y="779">X</text><text x="373" y="772">Y</text></g>
        </svg>

        <div class="absolute top-[8px] left-[9px] text-[13px] leading-[18px] text-[#444]">
          <p>Kehlsparren</p>
          <p>DIN EN 1995:2013</p>
          <p>Nadelholz C24, Nutzungsklasse 2</p>
          <p>D-07426 Allendorf(371,00 m)</p>
          <p>Mit Eigengewicht</p>
          <p>Rechtwinklig und symmetrisch</p>
        </div>

        <div class="absolute top-[4px] right-[4px] flex flex-col items-center gap-[8px]">
          <button class="h-[24px] w-[24px] bg-[#d0d0d0] text-[9px] leading-[10px] font-bold text-[#888]"><span class="block pl-[2px] text-left">2D/</span><span class="block pr-px text-right">3D</span></button>
          <button aria-label="Ansicht 3D"><svg width="22" height="22"><use href="#roof"/></svg></button>
          <button aria-label="Ansicht vorne"><svg width="22" height="22"><path d="m8 17 7-16 1 14-2 5z" fill="#e02020"/><use href="#roof"/></svg></button>
          <button aria-label="Ansicht seitlich"><svg width="22" height="22"><path d="m1 3 5 3 2 11z" fill="#e02020"/><use href="#roof"/></svg></button>
          <button aria-label="Ansicht oben"><svg width="22" height="22"><use href="#roof"/><path d="m7 17 14-8v12h-7z" fill="#e02020"/></svg></button>
        </div>

        <div class="absolute right-[6px] bottom-0 w-[128px] text-[13px] leading-[17px] whitespace-nowrap">
          <p class="text-[#555]">Maximale Ausnutzung</p>
          <div class="flex items-center"><span class="w-[29px]">GZT</span><div class="h-[12px] w-[68px] bg-linear-to-b from-[#aaa] via-[#fafafa] to-[#aaa]"><div class="h-full bg-linear-to-b from-[#9ab86a] via-[#c8f070] to-[#9ab86a]" style="width:83%"></div></div><span class="ml-auto">83 %</span></div>
          <div class="flex items-center"><span class="w-[29px]">GZG</span><div class="h-[12px] w-[68px] bg-linear-to-b from-[#aaa] via-[#fafafa] to-[#aaa]"><div class="h-full bg-linear-to-b from-[#9ab86a] via-[#c8f070] to-[#9ab86a]" style="width:56%"></div></div><span class="ml-auto">56 %</span></div>
        </div>
      </div>

      <div class="mt-[4px] flex h-[24px] items-end bg-[#bbcde5] pl-[5px] text-[#111]">
        <button class="flex h-[22px] w-[155px] items-center gap-[8px] rounded-t-xs bg-[#f4f9ff] pl-[6px]"><svg width="15" height="13"><use href="#sheet"/></svg>Auflager infolge Pfetten</button>
        <button class="flex h-[22px] w-[146px] items-center gap-[8px] pl-[12px]"><svg width="15" height="13"><use href="#sheet"/></svg>Zusätzliche Auflager</button>
        <button class="flex h-[22px] w-[136px] items-center gap-[8px] pl-[13px]"><svg width="15" height="13"><use href="#sheet"/></svg>Standard-Lastfälle</button>
        <button class="flex h-[22px] w-[130px] items-center gap-[8px] pl-[12px]"><svg width="15" height="13"><use href="#sheet"/></svg>Zusatz-Lastfälle</button>
        <button class="mr-[4px] ml-auto self-center" aria-label="Schließen"><svg width="8" height="8"><path d="m.5.500 7 7M7.500.500l-7 7" stroke="#000" stroke-width="1.800"/></svg></button>
      </div>
    </section>
  </main>
  <footer class="h-[22px] shrink-0 border-t border-[#c8c8c8] bg-[#f3f2f1]"></footer>

  <script>
    const red = '#8b0000', teal = '#007070';

    // triangular line load: apex x/y, run to the left, rise of the upper edge, load height at the end
    function load(x, y, dx, dy, h, color) {
      const step = h < 20 ? 7 : 5;
      let d = '', tips = '';
      for (let s = step; s <= dx; s += step) {
        const top = y + dy * s / dx, bottom = top + h * s / dx;
        d += `M${x - s} ${top}V${bottom}`;
        if (h > 20) tips += `M${x - s - 2} ${bottom - 6}h4l-2 6z`;
        else tips += `M${x - s - 1} ${bottom - 5}h3l-1 5z`;
      }
      return `<path d="M${x} ${y}l${-dx} ${dy}v${h}z" fill="${color}" fill-opacity=".1" stroke="${color}" stroke-width=".7"/>` +
        `<path d="${d}" stroke="${color}" stroke-opacity=".8"/><path d="${tips}" fill="${color}"/>`;
    }

    let loads = load(1011, 218, 60, 45, 30, red) + load(1011, 247, 60, 45, 30, red)
      + load(951, 293, 60, 47, 30, red) + load(951, 322, 60, 47, 30, red);
    for (let i = 0; i < 4; i++) {
      const h = i < 2 ? 15 : 19;
      loads += load(993 + 3 * i, 328 + 23 * i, 61, 159, h, red) + load(932 + 3 * i, 494 + 23 * i, 60, 156, h, red);
    }
    loads += load(1011, 436, 60, 142, 30, teal) + load(1011, 466, 60, 142, 30, teal)
      + load(951, 608, 60, 142, 30, teal) + load(951, 638, 60, 142, 26, teal);
    document.getElementById('loads').innerHTML = loads;

    const labels = [
      [992, 207, '0,00', red], [992, 236, '0,00', red],
      [932, 269, '1,38', red], [932, 284, '0,00', red], [932, 298, '1,38', red], [932, 313, '0,00', red],
      [871, 346, '1,38', red], [871, 375, '1,38', red],
      [973, 320, '0,00', red], [976, 343, '0,00', red], [979, 366, '0,00', red], [982, 390, '0,00', red],
      [992, 428, '0,00', teal], [992, 457, '0,00', teal],
      [912, 480, '0,38', red], [913, 486, '0,00', red], [914, 503, '0,38', red], [916, 509, '0,00', red],
      [918, 526, '0,54', red], [919, 533, '0,00', red], [920, 550, '0,54', red], [922, 556, '0,00', red],
      [932, 581, '1,13', teal], [932, 594, '0,00', teal], [932, 610, '1,13', teal], [932, 623, '0,00', teal],
      [852, 646, '0,38', red], [855, 670, '0,38', red], [858, 692, '0,54', red], [861, 715, '0,54', red],
      [871, 747, '1,13', teal], [871, 777, '1,13', teal],
      [974, 546, '2', '#222', 15], [914, 712, '1', '#222', 15]
    ];
    document.getElementById('labels').innerHTML = labels.map(([x, y, text, color, w = 40]) =>
      `<rect x="${x + .5}" y="${y + .5}" width="${w}" height="17" fill="#fff" stroke="#aaa"/>` +
      `<text x="${x + w / 2}" y="${y + 14}" text-anchor="middle" fill="${color}">${text}</text>`).join('');
  </script>
</body>
</html>
